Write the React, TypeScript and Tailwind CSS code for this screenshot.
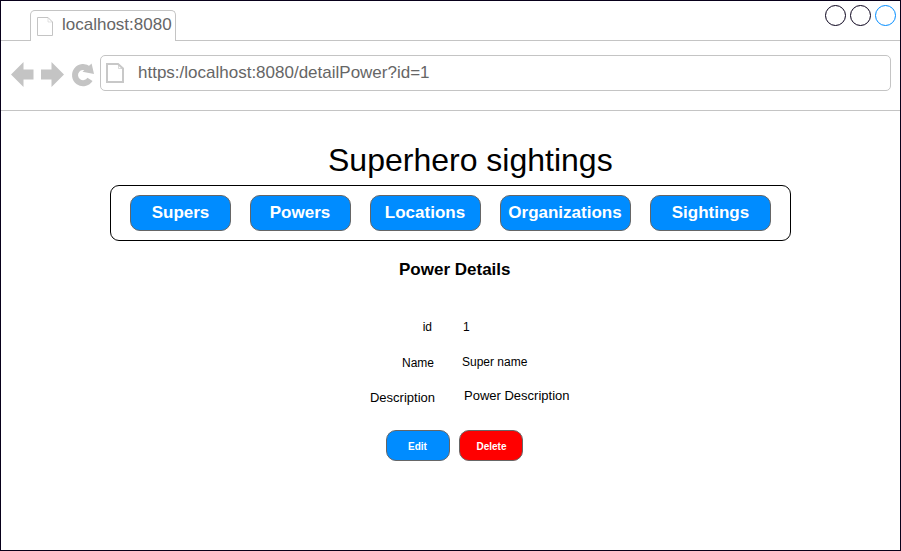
const navItems = [
  { label: 'Supers', width: 'w-[101px]' },
  { label: 'Powers', width: 'w-[101px] pr-px' },
  { label: 'Locations', width: 'w-[111px] pr-px' },
  { label: 'Organizations', width: 'w-[131px] pr-px' },
  { label: 'Sightings', width: 'w-[121px]' },
];

function TabPageIcon() {
  return (
    <svg className="block h-5 w-[18px] shrink-0" viewBox="0 0 18 20" fill="none" stroke="#c4c4c4">
      <path d="M1.5 1.5H12L16.5 6V19.5H1.5Z" />
      <path d="M12 1.5V6H16.5" strokeWidth="0.5" />
    </svg>
  );
}

function AddressPageIcon() {
  return (
    <svg className="block h-[22px] w-[19px] shrink-0" viewBox="0 0 19 22" fill="none" stroke="#c8c8c8" strokeWidth="2">
      <path d="M1 2H12L17 6.5V20H1Z" />
      <path d="M12.5 2.5V6.5H16.5" strokeWidth="0.7" />
    </svg>
  );
}

function HistoryIcons() {
  return (
    <svg className="block h-[30px] w-[90px] shrink-0" viewBox="10 60 90 30">
      <path fill="#c4c4c4" d="M11 74.5L23.5 62V69.5H33.5V79.5H23.5V87Z" />
      <path fill="#c4c4c4" d="M64 74.5L51.5 62V69.5H41V79.5H51.5V87Z" />
      <path fill="none" stroke="#c4c4c4" strokeWidth="6" d="M88.5 69A8.1 8.1 0 1 0 90 79.3" />
      <path fill="#c4c4c4" d="M91.6 63.5L94 74L82.5 71.8Z" />
    </svg>
  );
}

export default function App() {
  return (
    <div className="flex h-[551px] w-[901px] flex-col overflow-hidden border border-[#08001a] bg-white font-['Liberation_Sans',Arial,sans-serif] text-black">
      <header className="flex h-10 shrink-0 justify-between border-b border-[#c4c4c4] pr-1">
        <div className="-mb-px ml-[29px] mt-[9px] flex w-[146px] rounded-t-[5px] border border-b-0 border-[#c4c4c4] bg-white pl-[5px] pt-[5px]">
          <TabPageIcon />
          <span className="ml-[8px] -mt-[1px] text-[17px] leading-5 text-[#666666]">localhost:8080</span>
        </div>
        <div className="mt-1 flex gap-1">
          <i className="size-[21px] rounded-full border border-[#08001a]" />
          <i className="size-[21px] rounded-full border border-[#08001a]" />
          <i className="size-[21px] rounded-full border border-[#008cff]" />
        </div>
      </header>
      <div className="flex h-[70px] shrink-0 border-b border-[#c4c4c4] pl-[9px] pt-[14px]">
        <div className="pt-[5px]">
          <HistoryIcons />
        </div>
        <div className="flex h-9 w-[791px] rounded-[5px] border border-[#c4c4c4] pl-[5px] pt-[6px]">
          <AddressPageIcon />
          <span className="ml-[13px] mt-px text-[17px] leading-5 text-[#666666]">https:/localhost:8080/detailPower?id=1</span>
        </div>
      </div>
      <main className="flex flex-col">
        <h1 className="ml-[327px] mt-[30px] h-[44px] text-[32px] leading-[38px]">Superhero sightings</h1>
        <nav className="ml-[109px] flex h-14 w-[681px] gap-[19px] rounded-[9px] border border-black pl-[19px] pt-[9px]">
          {navItems.map(({ label, width }) => (
            <button
              key={label}
              className={`${width} h-9 shrink-0 rounded-[10px] border border-[#666666] bg-[#008cff] text-center text-[17px] font-bold leading-[34px] text-white`}
            >
              {label}
            </button>
          ))}
        </nav>
        <h2 className="ml-[398px] mt-[19px] text-[17px] font-bold leading-5">Power Details</h2>
        <dl className="mt-[39px] text-[12px] leading-[14px]">
          <div className="flex h-[35px]">
            <dt className="w-[431px] pt-px text-right">id</dt>
            <dd className="ml-[31px] pt-px">1</dd>
          </div>
          <div className="flex h-[35px]">
            <dt className="w-[433px] pt-[2px] text-right">Name</dt>
            <dd className="ml-[28px] pt-px">Super name</dd>
          </div>
          <div className="flex h-[41px]">
            <dt className="w-[434px] pt-[2px] text-right text-[13px] leading-[14px]">Description</dt>
            <dd className="ml-[29px] text-[13px] leading-[14px]">Power Description</dd>
          </div>
        </dl>
        <div className="ml-[385px] flex gap-[9px]">
          <button className="h-[31px] w-16 rounded-[10px] border border-[#666666] bg-[#008cff] pr-px text-[10px] font-bold leading-[31px] text-white">Edit</button>
          <button className="h-[31px] w-16 rounded-[10px] border border-[#666666] bg-[#ff0000] pl-px text-[10px] font-bold leading-[31px] text-white">Delete</button>
        </div>
      </main>
    </div>
  );
}
